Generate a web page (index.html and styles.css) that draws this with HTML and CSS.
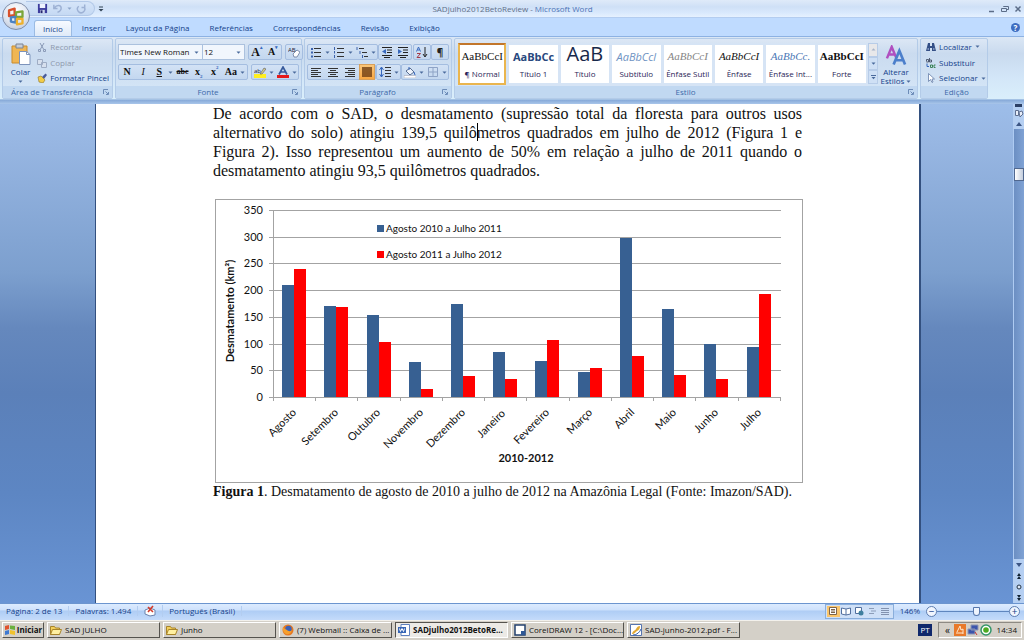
FILE: index.html
```html
<!DOCTYPE html>
<html lang="pt-BR">
<head>
<meta charset="utf-8">
<title>SADjulho2012BetoReview - Microsoft Word</title>
<link rel="stylesheet" href="styles.css">
</head>
<body>
<svg class="sprite" aria-hidden="true">
  <symbol id="down" viewBox="0 0 5 3"><path d="M0.5 0.5h4L2.500 2.800z" fill="#4a6a9c"/></symbol>
  <symbol id="launch" viewBox="0 0 6 6"><path d="M.5 5V.5H5M2.500 2.500L5 5M5.500 3v2.500H3" fill="none" stroke="#6d8cb8"/></symbol>
  <symbol id="folder" viewBox="0 0 12 12"><path d="M.5 2.500h4l1 1.500h4v6.500h-9z" fill="#f3cf5c" stroke="#a8842a"/><path d="M2.500 5.500h9l-2 5h-9z" fill="#fff0a0" stroke="#a8842a"/></symbol>
</svg>

<header class="top">
  <button class="office" aria-label="Botão Office">
    <svg viewBox="0 0 28 28"><g fill="none" stroke-width="2.500" stroke-linejoin="round"><path d="M6.500 8l6-2v7l-6 1z" stroke="#d8502a"/><path d="M14 10l7-1v6h-7z" stroke="#7ba63a"/><path d="M8.500 15.500l5-.5v6l-5-1z" stroke="#4b82c4"/><path d="M15 17h6v5l-6 1z" stroke="#eeb12e"/></g></svg>
  </button>
  <div class="titlebar">
    <div class="quick">
      <button aria-label="Salvar"><svg class="i11" viewBox="0 0 12 12"><path d="M1 1h10v10H1z" fill="#3d3d9e"/><path d="M3 1h6v4.500H3z" fill="#eef3ff"/><path d="M3.500 7.500h5V11h-5z" fill="#cdd6ee"/><path d="M4 8h2v3H4z" fill="#25256e"/></svg></button>
      <button aria-label="Desfazer"><svg class="i11" viewBox="0 0 12 12"><path d="M2 2v4h4M2.500 5.500C5 1.500 10 2 10 5.500c0 2.500-2 4-4 4.500" fill="none" stroke="#9db1d4" stroke-width="1.600"/></svg></button>
      <svg class="arr"><use href="#down"/></svg>
      <button aria-label="Refazer"><svg class="i11" viewBox="0 0 12 12"><path d="M9.500 1.500v3.500H6M9 4.500a4 4 0 1 1-6-1" fill="none" stroke="#9db1d4" stroke-width="1.600"/></svg></button>
    </div>
    <button class="more" aria-label="Personalizar"><svg viewBox="0 0 6 6"><path d="M1 1h4" stroke="#345"/><path d="M.5 3h5L3 5.500z" fill="#345"/></svg></button>
    <h1 class="title"><span>SADjulho2012BetoReview</span> - <b>Microsoft Word</b></h1>
    <div class="winbtns">
      <button aria-label="Minimizar"><svg viewBox="0 0 8 8"><path d="M1 6.500h5" stroke="#5c6d88" stroke-width="1.500"/></svg></button>
      <button aria-label="Restaurar"><svg viewBox="0 0 8 8"><path d="M2.500 2V1.500h5v3H6M.5 3.500h5v3h-5z" fill="none" stroke="#5c6d88"/></svg></button>
      <button aria-label="Fechar"><svg viewBox="0 0 8 8"><path d="M1.500 1.500l5 5M6.500 1.500l-5 5" stroke="#5c6d88" stroke-width="1.500"/></svg></button>
    </div>
  </div>
  <nav class="tabs">
    <button class="tab active">Início</button><button class="tab">Inserir</button><button class="tab">Layout da Página</button><button class="tab">Referências</button><button class="tab">Correspondências</button><button class="tab">Revisão</button><button class="tab">Exibição</button>
    <button class="help" aria-label="Ajuda">?</button>
  </nav>
</header>

<section class="ribbon">
  <div class="group clip">
    <div class="gbody">
      <button class="big"><svg class="paste" viewBox="0 0 20 22"><path d="M1 3h15v17H1z" fill="#f0b653" stroke="#c98b2d"/><path d="M5 1h7v4H5z" fill="#c7cdd8" stroke="#7b8494"/><path d="M8.500 8.500h7l3.500 3v10H8.500z" fill="#fff" stroke="#7d93bb"/><path d="M15.500 8.500v3H19" fill="none" stroke="#7d93bb"/></svg><span>Colar</span><svg class="arr"><use href="#down"/></svg></button>
      <div class="rows">
        <button class="row off"><svg class="i10" viewBox="0 0 10 10"><path d="M3 1l3.500 6M7 1L3.500 7" stroke="#8b9bb8"/><path d="M1.500 7.500h2v2h-2zM6.500 7.500h2v2h-2z" fill="none" stroke="#8b9bb8"/></svg>Recortar</button>
        <button class="row off"><svg class="i10" viewBox="0 0 10 10"><path d="M.5 1.500h5v5h-5zM4.500 4.500h5v5h-5z" fill="#d7e0ee" stroke="#9eacc4"/></svg>Copiar</button>
        <button class="row"><svg class="i10" viewBox="0 0 10 10"><path d="M5 4l3.500-3.500 1.500 1.500L7 6z" fill="#4a5c9c"/><path d="M1 4l3-1 4 4-2 3-4-1z" fill="#f2cc48" stroke="#8c7427" stroke-width=".6"/></svg>Formatar Pincel</button>
      </div>
    </div>
    <div class="glabel"><span>Área de Transferência</span><svg class="launch"><use href="#launch"/></svg></div>
  </div>

  <div class="group font">
    <div class="gbody stack">
      <div class="line">
        <div class="combo wide"><select aria-label="Fonte"><option>Times New Roman</option></select><svg class="arr"><use href="#down"/></svg></div>
        <div class="combo"><select aria-label="Tamanho"><option>12</option></select><svg class="arr"><use href="#down"/></svg></div>
        <div class="set gap"><button class="ser large">A<sup>▴</sup></button><button class="ser">A<sup>▾</sup></button></div>
        <div class="set gap"><button aria-label="Limpar formatação"><svg class="i12" viewBox="0 0 12 12"><text x="0" y="6" class="tiny">AB</text><path d="M5 8l4-4 3 2-3 5H6z" fill="#fff" stroke="#667799" stroke-width=".8"/></svg></button></div>
      </div>
      <div class="line">
        <div class="set fill"><button class="ser"><b>N</b></button><button class="ser"><i>I</i></button><button class="ser"><u>S</u></button><svg class="arr"><use href="#down"/></svg><button class="ser"><s>abc</s></button><button class="ser">x<sub>2</sub></button><button class="ser">x<sup>2</sup></button><button class="ser">Aa</button><svg class="arr"><use href="#down"/></svg></div>
        <div class="set gap hl"><button aria-label="Realce"><svg class="i12" viewBox="0 0 12 12"><path d="M0 8h12v4H0z" fill="#ffee20"/><text x="0" y="7" class="tiny">ab</text><path d="M6 8l4-6 2 1-4 5z" fill="#d6cd89" stroke="#556" stroke-width=".6"/></svg></button><svg class="arr"><use href="#down"/></svg><button aria-label="Cor da fonte"><svg class="i12" viewBox="0 0 12 12"><path d="M2 8.500L6 1l4 7.500M3.500 6h5" fill="none" stroke="#375a9c" stroke-width="1.700"/><path d="M0 9h12v3H0z" fill="#e61919"/></svg></button><svg class="arr"><use href="#down"/></svg></div>
      </div>
    </div>
    <div class="glabel"><span>Fonte</span><svg class="launch"><use href="#launch"/></svg></div>
  </div>

  <div class="group para">
    <div class="gbody stack">
      <div class="line between">
        <div class="set lists">
          <button aria-label="Marcadores"><svg class="i12" viewBox="0 0 12 12"><path d="M4 2.500h7M4 6.500h7M4 10.500h7" stroke="#333"/><path d="M1 2h2v2H1zM1 5.500h2v2H1zM1 9.500h2v2H1z" fill="#3c62ad"/></svg></button><svg class="arr"><use href="#down"/></svg>
          <button aria-label="Numeração"><svg class="i12" viewBox="0 0 12 12"><path d="M4 2.500h7M4 6.500h7M4 10.500h7" stroke="#333"/><path d="M1.500 1v3M1.500 5v2.500M1.500 9v3" stroke="#3c62ad"/></svg></button><svg class="arr"><use href="#down"/></svg>
          <button aria-label="Vários níveis"><svg class="i12" viewBox="0 0 12 12"><path d="M3 2.500h5M6 6.500h5M8 10.500h4" stroke="#333"/><path d="M1 1v3M4 5v3M6.500 9v3" stroke="#3c62ad"/></svg></button><svg class="arr"><use href="#down"/></svg>
        </div>
        <div class="set"><button aria-label="Diminuir recuo"><svg class="i12" viewBox="0 0 12 12"><path d="M1 1.500h10M6 4h5M6 6.500h5M1 9.500h10M3 11.500h6" stroke="#222"/><path d="M5 3v5L1 5.500z" fill="#3768bd"/></svg></button><button aria-label="Aumentar recuo"><svg class="i12" viewBox="0 0 12 12"><path d="M1 1.500h10M6 4h5M6 6.500h5M1 9.500h10M3 11.500h6" stroke="#222"/><path d="M1 3v5l4-2.500z" fill="#3768bd"/></svg></button></div>
        <div class="set"><button aria-label="Classificar"><svg class="i12" viewBox="0 0 12 12"><path d="M.5 5.500L2.500 1l2 4.500M1.500 4h2" fill="none" stroke="#3768bd"/><path d="M1 7.500h3.500L1 11.500h3.500" fill="none" stroke="#a33a4a"/><path d="M9 1v9M7 8l2 3 2-3" fill="none" stroke="#222"/></svg></button></div>
        <div class="set"><button class="pil">¶</button></div>
      </div>
      <div class="line between">
        <div class="set aligns">
          <button aria-label="Esquerda"><svg class="i12" viewBox="0 0 12 12"><path d="M1 2.500h10M1 4.500h7M1 6.500h10M1 8.500h7M1 10.500h10" stroke="#333"/></svg></button>
          <button aria-label="Centralizar"><svg class="i12" viewBox="0 0 12 12"><path d="M1 2.500h10M3 4.500h6M1 6.500h10M3 8.500h6M1 10.500h10" stroke="#333"/></svg></button>
          <button aria-label="Direita"><svg class="i12" viewBox="0 0 12 12"><path d="M1 2.500h10M4 4.500h7M1 6.500h10M4 8.500h7M1 10.500h10" stroke="#333"/></svg></button>
          <button class="on" aria-label="Justificar"><svg class="i12" viewBox="0 0 12 12"><path d="M1 2h10M1 4h10M1 6h10M1 8h10M1 10h10" stroke="#6b3a10" stroke-width="1.400"/></svg></button>
        </div>
        <div class="set"><button aria-label="Espaçamento"><svg class="i12" viewBox="0 0 12 12"><path d="M6 1.500h6M6 4.500h6M6 7.500h6M6 10.500h6" stroke="#333"/><path d="M2.500 1v10M.5 4l2-3 2 3M.5 8l2 3 2-3" fill="none" stroke="#3768bd"/></svg></button><svg class="arr"><use href="#down"/></svg></div>
        <div class="set"><button aria-label="Sombreamento"><svg class="i12" viewBox="0 0 12 12"><path d="M2 5l4-3 4 4-4 3z" fill="#eef3fb" stroke="#5a6d91"/><path d="M5 4V1M10 6l1 3" stroke="#3768bd" fill="none"/><path d="M0 9.500h12v2.500H0z" fill="#fff" stroke="#99a" stroke-width=".5"/></svg></button><svg class="arr"><use href="#down"/></svg><button aria-label="Bordas"><svg class="i12" viewBox="0 0 12 12"><path d="M1.500 1.500h9v9h-9zM6 1.500v9M1.500 6h9" fill="none" stroke="#8ea3c6"/></svg></button><svg class="arr"><use href="#down"/></svg></div>
      </div>
    </div>
    <div class="glabel"><span>Parágrafo</span><svg class="launch"><use href="#launch"/></svg></div>
  </div>

  <div class="group style">
    <div class="gbody">
      <div class="gallery">
        <button class="card sel"><span class="pv serif">AaBbCcI</span><span>¶ Normal</span></button>
        <button class="card"><span class="pv navy">AaBbCc</span><span>Título 1</span></button>
        <button class="card"><span class="pv huge">AaB</span><span>Título</span></button>
        <button class="card"><span class="pv sub">AaBbCcl</span><span>Subtítulo</span></button>
        <button class="card"><span class="pv serif em gray">AaBbCcI</span><span>Ênfase Sutil</span></button>
        <button class="card"><span class="pv serif em">AaBbCcI</span><span>Ênfase</span></button>
        <button class="card"><span class="pv serif em blue">AaBbCc.</span><span>Ênfase Int...</span></button>
        <button class="card"><span class="pv serif strong">AaBbCcI</span><span>Forte</span></button>
      </div>
      <div class="gscroll"><button class="dim" aria-label="Acima"><svg class="arr flip"><use href="#down"/></svg></button><button aria-label="Abaixo"><svg class="arr"><use href="#down"/></svg></button><button class="mo" aria-label="Mais"><svg class="arr"><use href="#down"/></svg></button></div>
      <button class="big alter"><svg class="aa" viewBox="0 0 22 22"><path d="M1.500 14L6.500 2l5 12M3.500 10h6" fill="none" stroke="#b04fc0" stroke-width="2.600"/><path d="M8.500 20.500L14.500 6l6 14.500M10.500 16h8" fill="none" stroke="#4c7fcb" stroke-width="2.800"/></svg><span>Alterar<br>Estilos <svg class="arr"><use href="#down"/></svg></span></button>
    </div>
    <div class="glabel"><span>Estilo</span><svg class="launch"><use href="#launch"/></svg></div>
  </div>

  <div class="group edit">
    <div class="gbody">
      <div class="rows">
        <button class="row"><svg class="i10" viewBox="0 0 10 10"><path d="M2 1h2v3h2V1h2l2 8H6V6H4v3H0z" fill="#344f86"/><path d="M1.500 7h1.500M7 7h1.500" stroke="#c5d6f0"/></svg>Localizar <svg class="arr"><use href="#down"/></svg></button>
        <button class="row"><svg class="i10" viewBox="0 0 10 10"><path d="M.5 3.500v-2h2v2.500h-2M3.500 0v4h2v-2h-2" fill="none" stroke="#333d55" stroke-width=".8"/><path d="M4.500 7v2.500h2V7h-2M9.500 7h-1.500v2.500h1.500" fill="none" stroke="#2f7a4a" stroke-width=".9"/><path d="M1 5.500v3h2" fill="none" stroke="#3768bd"/></svg>Substituir</button>
        <button class="row"><svg class="i10" viewBox="0 0 10 10"><path d="M2.500.5v8l2-2 1.500 3 1-.5-1-3h2.500z" fill="#fff" stroke="#667fa9" stroke-width=".8"/></svg>Selecionar <svg class="arr"><use href="#down"/></svg></button>
      </div>
    </div>
    <div class="glabel"><span>Edição</span></div>
  </div>
</section>

<main class="work">
  <article class="page">
    <p class="text">De acordo com o SAD, o desmatamento (supressão total da floresta para outros usos alternativo do solo) atingiu 139,5 quilô<span class="caret"></span>metros quadrados em julho de 2012 (Figura 1 e Figura 2). Isso representou um aumento de 50% em relação a julho de 2011 quando o desmatamento atingiu 93,5 quilômetros quadrados.</p>
    <figure class="fig">
      <svg class="chart" viewBox="0 0 586 282" role="img" aria-label="Desmatamento mensal">
        <path class="grid" d="M53 10.500h512M53 37.500h512M53 63.500h512M53 90.500h512M53 117.500h512M53 144.500h512M53 170.500h512M53 197.500h512M57.500 10v191M99.500 197v4M141.500 197v4M184.500 197v4M226.500 197v4M268.500 197v4M310.500 197v4M353.500 197v4M395.500 197v4M437.500 197v4M479.500 197v4M522.500 197v4M564.500 197v4"/>
        <g class="a"><path d="M66 197v-112h12v112zM108 197v-91h12v91zM151 197v-82h12v82zM193 197v-35h12v35zM235 197v-93h12v93zM277 197v-45h12v45zM319 197v-36h12v36zM362 197v-25h12v25zM404 197v-159h12v159zM446 197v-88h12v88zM488 197v-53h12v53zM531 197v-50h12v50z"/><path d="M161 25h7v7h-7z"/></g>
        <g class="b"><path d="M78 197v-128h12v128zM120 197v-90h12v90zM163 197v-55h12v55zM205 197v-8h12v8zM247 197v-21h12v21zM289 197v-18h12v18zM331 197v-57h12v57zM374 197v-29h12v29zM416 197v-41h12v41zM458 197v-22h12v22zM500 197v-18h12v18zM543 197v-103h12v103z"/><path d="M161 51h7v7h-7z"/></g>
        <g class="end"><text x="47" y="14">350</text><text x="47" y="41">300</text><text x="47" y="67">250</text><text x="47" y="94">200</text><text x="47" y="121">150</text><text x="47" y="148">100</text><text x="47" y="174">50</text><text x="47" y="201">0</text></g>
        <text class="leg" x="170" y="32">Agosto 2010 a Julho 2011</text>
        <text class="leg" x="170" y="58">Agosto 2011 a Julho 2012</text>
        <g class="end">
          <text transform="translate(81 213) rotate(-45)">Agosto</text><text transform="translate(123 213) rotate(-45)">Setembro</text><text transform="translate(165 213) rotate(-45)">Outubro</text><text transform="translate(208 213) rotate(-45)">Novembro</text><text transform="translate(250 213) rotate(-45)">Dezembro</text><text transform="translate(290 214) rotate(-45)">Janeiro</text><text transform="translate(334 213) rotate(-45)">Fevereiro</text><text transform="translate(377 213) rotate(-45)">Março</text><text transform="translate(419 213) rotate(-45)">Abril</text><text transform="translate(461 213) rotate(-45)">Maio</text><text transform="translate(503 213) rotate(-45)">Junho</text><text transform="translate(546 213) rotate(-45)">Julho</text>
        </g>
        <text class="axis" transform="translate(18 111) rotate(-90)">Desmatamento (km²)</text>
        <text class="axis" x="310" y="262">2010-2012</text>
      </svg>
      <figcaption><b>Figura 1</b>. Desmatamento de agosto de 2010 a julho de 2012 na Amazônia Legal (Fonte: Imazon/SAD).</figcaption>
    </figure>
  </article>
  <div class="scroll">
    <button class="split" aria-label="Dividir"></button>
    <button aria-label="Régua"><svg viewBox="0 0 10 10"><path d="M1.500 2.500h3v5h-3zM5 4l3-1 1 3-3 3z" fill="#e9effa" stroke="#5f6f90"/></svg></button>
    <button aria-label="Rolar para cima"><svg viewBox="0 0 10 10"><path d="M2 7l3-4 3 4z" fill="#3c5584"/></svg></button>
    <div class="track"><div class="thumb"></div></div>
    <button aria-label="Rolar para baixo"><svg viewBox="0 0 10 10"><path d="M2 3l3 4 3-4z" fill="#3c5584"/></svg></button>
    <button aria-label="Página anterior"><svg viewBox="0 0 10 10"><path d="M3 5l2-3 2 3zM3 8l2-3 2 3z" fill="#123"/></svg></button>
    <button aria-label="Procurar objeto"><svg viewBox="0 0 10 10"><circle cx="5" cy="5" r="2" fill="#dde8f8" stroke="#234"/></svg></button>
    <button aria-label="Próxima página"><svg viewBox="0 0 10 10"><path d="M3 2l2 3 2-3zM3 5l2 3 2-3z" fill="#123"/></svg></button>
  </div>
</main>

<footer class="status">
  <span class="cell">Página: 2 de 13</span><span class="cell">Palavras: 1.494</span>
  <span class="cell"><svg class="i12" viewBox="0 0 12 12"><path d="M1 5l5-2 5 2v5L6 11 1 9z" fill="#fff" stroke="#6d83ad"/><path d="M4 2l5 5M9 1L4 7" stroke="#d23b2b" stroke-width="1.600"/></svg></span>
  <span class="cell">Português (Brasil)</span>
  <div class="views">
    <button class="on" aria-label="Layout de impressão"><svg viewBox="0 0 10 10"><path d="M1.500 1.500h7v7h-7zM3 3.500h4M3 5h4M3 6.500h4" fill="#fff" stroke="#7d654b"/></svg></button>
    <button aria-label="Leitura"><svg viewBox="0 0 10 10"><path d="M.5 2l4.500 1 4.500-1v6L5 9 .5 8zM5 3v6" fill="#fff" stroke="#53709f"/></svg></button>
    <button aria-label="Layout da Web"><svg viewBox="0 0 10 10"><path d="M1.500 1.500h6v6h-6z" fill="#fff" stroke="#53709f"/><circle cx="7" cy="7" r="2.500" fill="#3f7f9f"/></svg></button>
    <button aria-label="Estrutura"><svg viewBox="0 0 10 10"><path d="M2 2.500h5M4 5h5M2 7.500h5" stroke="#8c9db9"/></svg></button>
    <button aria-label="Rascunho"><svg viewBox="0 0 10 10"><path d="M1 2.500h8M1 4.500h8M1 6.500h8M1 8.500h8" stroke="#8292af"/></svg></button>
  </div>
  <span class="pct">146%</span>
  <button class="round" aria-label="Menos zoom">−</button>
  <input class="zoom" type="range" min="0" max="100" value="55" aria-label="Zoom">
  <button class="round" aria-label="Mais zoom">+</button>
</footer>

<nav class="taskbar">
  <button class="start"><svg class="i12" viewBox="0 0 12 12"><path d="M1 2l4-1v4L1 6z" fill="#e0532f"/><path d="M6 1.500l5 .5v4l-5-1z" fill="#6ab03e"/><path d="M1 7l4-1v4l-4 1z" fill="#3d79d2"/><path d="M6 6l5 1v4l-5-1z" fill="#f0c22c"/></svg>Iniciar</button>
  <button class="task"><svg class="i12"><use href="#folder"/></svg><span>SAD JULHO</span></button>
  <button class="task"><svg class="i12"><use href="#folder"/></svg><span>Junho</span></button>
  <button class="task"><svg class="i12" viewBox="0 0 12 12"><circle cx="6" cy="6" r="5.500" fill="#e77820"/><circle cx="6.500" cy="5" r="3.200" fill="#3d62b5"/><path d="M1 3c1 2 3 2 4 3s3 2 5 0c-1 4-4 5-6 4S0 6 1 3z" fill="#f6a02c"/></svg><span>(7) Webmail :: Caixa de ...</span></button>
  <button class="task cur"><svg class="i12" viewBox="0 0 12 12"><path d="M3 .5h8.500v11H3z" fill="#fff" stroke="#5f80bd"/><path d="M0 3h8v6H0z" fill="#3866b5"/><path d="M1.500 4.500l1 3 1.500-3 1.500 3 1-3" fill="none" stroke="#fff"/></svg><span>SADjulho2012BetoRe...</span></button>
  <button class="task"><svg class="i12" viewBox="0 0 12 12"><path d="M1 1h10v10H1z" fill="#fff" stroke="#23406e" stroke-width="1.500"/><path d="M7 7h4v4H7z" fill="#2e5795"/></svg><span>CorelDRAW 12 - [C:\Doc...</span></button>
  <button class="task"><svg class="i12" viewBox="0 0 12 12"><path d="M.5.5h11v11H.5z" fill="#fff" stroke="#5674ae"/><path d="M2 10c1-4 3-3 4-5s2-3 4-3c0 3-1 4-3 5s-2 3-5 3z" fill="#e2a832"/><path d="M3 11c4 0 7-3 8-6" fill="none" stroke="#3c66ad"/></svg><span>SAD-junho-2012.pdf - F...</span></button>
  <span class="lang">PT</span>
  <div class="tray">
    <button aria-label="Ícones ocultos">«</button>
    <svg class="i12" viewBox="0 0 12 12"><path d="M0 0h12v12H0z" fill="#e8792a"/><path d="M3 8l3-6 1 4 2-1v5M2 9h7" fill="none" stroke="#ffe9d0"/></svg>
    <svg class="i12" viewBox="0 0 12 12"><path d="M4 1h7v5H4zM1 5h7v5H1z" fill="#3c55ab" stroke="#8d97b5"/><path d="M8 8l2 3" stroke="#c33"/></svg>
    <svg class="i12" viewBox="0 0 12 12"><circle cx="6" cy="6" r="5" fill="#fff" stroke="#34946a" stroke-width="1.500"/><circle cx="6" cy="6" r="2.800" fill="#4caa22"/></svg>
    <time>14:34</time>
  </div>
</nav>
</body>
</html>
```

FILE: styles.css
```css
* { box-sizing: border-box; }
html, body { height: 100%; }
body {
  margin: 0;
  display: flex;
  flex-direction: column;
  overflow: hidden;
  font: 8px/10px "Open Sans", "Noto Sans", sans-serif;
  color: #15428b;
  background: #bfdbff;
}
button, select, input { font: inherit; color: inherit; margin: 0; padding: 0; border: 0; background: none; }
button { display: inline-flex; align-items: center; justify-content: center; white-space: nowrap; }
svg { display: block; flex: none; }
.sprite { position: absolute; width: 0; height: 0; }
.arr { width: 5px; height: 3px; }
.i10 { width: 10px; height: 10px; }
.i11 { width: 11px; height: 11px; }
.i12 { width: 12px; height: 12px; }
.tiny { font: 6px "Open Sans", sans-serif; fill: #223; }

/* title bar and tabs */
.top { position: relative; flex: none; }
.office {
  position: absolute; left: 2px; top: 2px; z-index: 1;
  width: 28px; height: 28px; border-radius: 50%;
  border: 1px solid #7f8da8;
  background: radial-gradient(circle at 50% 30%, #fff, #dfe5f0 55%, #b3bfd3);
}
.office svg { width: 26px; height: 26px; }
.titlebar {
  display: flex; align-items: center; height: 18px;
  padding: 0 2px 0 26px;
  background: linear-gradient(#dfeaf9, #cfe0f6 40%, #d9e9fd 75%, #e6f1ff);
  border-bottom: 1px solid #b4cdf0;
}
.quick {
  display: flex; align-items: center; gap: 4px; height: 15px; padding: 0 7px 0 11px;
  border: 1px solid #b3c9e8; border-left: 0; border-radius: 0 8px 8px 0;
  background: linear-gradient(#d6e5f9, #c5d9f3);
}
.quick .arr { opacity: .5; }
.more { width: 12px; height: 12px; }
.more svg { width: 6px; height: 6px; }
.title { flex: 1; margin: 0; text-align: center; font-size: 8px; font-weight: 400; color: #5f6f88; padding-right: 70px; }
.title b { font-weight: 400; color: #4d73b6; }
.winbtns { display: flex; gap: 5px; }
.winbtns svg { width: 8px; height: 8px; }
.tabs { display: flex; align-items: flex-end; height: 18px; padding: 0 4px 0 34px; background: #bfdbff; }
.tab { height: 16px; padding: 0 10px; }
.tab.active {
  padding: 0 8px;
  border: 1px solid #9bbbe3; border-bottom: 0; border-radius: 3px 3px 0 0;
  background: linear-gradient(#f7faff, #dfeaf8);
}
.help { width: 9px; height: 9px; margin: 0 0 4px auto; border-radius: 50%; background: #3d6cc0; color: #fff; font-weight: 700; }

/* ribbon */
.ribbon {
  display: flex; flex: none; gap: 2px; height: 68px; padding: 1px 36px 5px 2px;
  border-top: 1px solid #8db2e3;
  background: linear-gradient(#dbe7f5, #c9daee 25%, #d3e6f8 60%, #d9eefb 90%, #d9eefb 92%, #86a9d8 94%, #a9c6ea);
}
.group {
  display: flex; flex-direction: column; min-width: 0;
  border: 1px solid #b3cbe8; border-radius: 2px;
  background: linear-gradient(#dce7f5, #cadbef 25%, #d6e7f8);
}
.clip { flex: 0 0 111px; }
.font { flex: 0 0 187px; }
.para { flex: 0 0 148px; }
.style { flex: 1; }
.edit { flex: 0 0 68px; }
.gbody { flex: 1; display: flex; padding: 0 3px; min-height: 0; }
.stack { flex-direction: column; padding: 5px 2px 2px; gap: 4px; }
.glabel {
  display: flex; align-items: center; height: 12px; padding: 0 3px 0 8px;
  background: #c1d8f1; color: #3e6aaa;
}
.glabel span { flex: 1; text-align: center; }
.clip .glabel span { text-align: left; }
.launch { width: 6px; height: 6px; }
.big { flex-direction: column; width: 30px; gap: 2px; }
.paste { width: 20px; height: 22px; }
.big .arr { margin-top: 1px; }
.rows { display: flex; flex-direction: column; padding-left: 2px; }
.row { flex: 1; justify-content: flex-start; gap: 3px; }
.off { color: #8d99ad; }
.line { display: flex; height: 16px; }
.between { justify-content: space-between; }
.combo { display: flex; align-items: center; flex: 0 0 43px; padding: 0 3px 0 0; border: 1px solid #abc1de; background: #f1f6fd; }
.combo.wide { flex: 0 0 84px; border-right: 0; }
.combo select { flex: 1; min-width: 0; padding-left: 1px; appearance: none; color: #111; }
.set {
  display: flex; align-items: center; gap: 2px; padding: 0 1px;
  border: 1px solid #a4bde0; border-radius: 2px;
  background: linear-gradient(#d3e2f5, #c3d7ef);
}
.set button { min-width: 14px; height: 14px; }
.gap { margin-left: 3px; }
.fill { flex: 1; justify-content: space-between; padding: 0 2px 0 1px; }
.lists, .aligns { gap: 3px; }
.lists { gap: 2px; }
.set .on { background: linear-gradient(#fbc678, #f9a743); outline: 1px solid #d8a05b; }
.ser { font: bold 10px/12px "Liberation Serif", serif; color: #111; }
.ser i { font-weight: 400; }
.ser.large { font-size: 12px; }
.ser s { font-size: 8px; }
.ser sup, .ser sub { font-size: 5px; line-height: 5px; color: #3768bd; }
.ser sup { align-self: flex-start; }
.ser sub { align-self: flex-end; }
.pil { color: #222; font-size: 10px; font-weight: 700; }

.style .gbody { padding: 4px 3px 0 3px; }
.gallery { flex: 1; display: grid; grid-template-columns: repeat(8, minmax(0, 1fr)); gap: 3px; padding: 0 2px 1px 0; background: #d6e4f5; }
.card { flex-direction: column; overflow: hidden; margin: 2px 0; background: #fff; color: #2a2557; justify-content: flex-end; gap: 2px; padding-bottom: 4px; }
.card.sel { margin: 0; border: 2px solid #eab54e; border-top-color: #c2762b; }
.pv { height: 21px; line-height: 21px; font-size: 11px; color: #111; }
.serif { font-family: "Liberation Serif", serif; }
.em { font-style: italic; }
.navy { color: #28487e; font-weight: 700; }
.pv.huge { font-size: 20px; line-height: 16px; color: #17294a; }
.sub { color: #6f93c3; font-style: italic; }
.gray { color: #858585; }
.blue { color: #4b77b5; }
.strong { font-weight: 700; }
.gscroll { display: flex; flex-direction: column; flex: 0 0 10px; margin-bottom: 2px; }
.gscroll button { flex: 1; border: 1px solid #b7cce8; background: #cfe0f5; }
.gscroll .dim { background: #e8e8ea; }
.gscroll .dim .arr { opacity: .4; }
.gscroll .mo .arr { border-top: 1px solid #4a6a9c; height: 5px; }
.flip { transform: rotate(180deg); }
.alter { width: 36px; gap: 1px; }
.alter .aa { width: 22px; height: 21px; }
.alter span { line-height: 9px; }
.alter .arr { display: inline-block; vertical-align: middle; margin: 0; }

/* document */
.work {
  flex: 1; display: flex; min-height: 0; padding-left: 95px;
  background: linear-gradient(#9dbde9, #97b6e2 8%, #7c9fce 34%, #6588bd 45%, #5b80b9 58%, #5d86c3 78%, #6994d4);
}
.page { flex: 1; min-width: 0; padding: 0 117px; background: #fff; border: solid #33507f; border-width: 0 2px 0 1px; overflow: hidden; }
.text { margin: 0; font: 16px/19px "Liberation Serif", serif; color: #111; text-align: justify; }
.caret { position: absolute; width: 1px; height: 18px; background: #000; }
.fig { margin: 19px 0 0; }
.chart {
  width: calc(100% - 1px); height: auto; margin-left: 2px;
  border: 1px solid #a3a3a3; font: 11px "Lato", sans-serif; fill: #111;
}
.grid { fill: none; stroke: #a3a3a3; }
.a { fill: #376092; }
.b { fill: #f00; }
.end { text-anchor: end; }
.leg { font-size: 10px; }
.axis { text-anchor: middle; font-weight: 700; }
figcaption { font: 14px/16px "Liberation Serif", serif; color: #111; white-space: nowrap; margin-top: 1px; }
.scroll { flex: 0 0 11px; margin-left: 92px; display: flex; flex-direction: column; background: #b5cff2; }
.scroll button { height: 11px; }
.scroll svg { width: 10px; height: 10px; }
.scroll .split { height: 3px; margin: 0 2px; background: #2c4066; }
.track { flex: 1; background: linear-gradient(90deg, #6c8fc3, #7fa2d4); border-left: 1px solid #aecbf2; padding-top: 39px; }
.thumb { height: 13px; border: 1px solid #51688f; background: linear-gradient(90deg, #fff, #c3cddd); }

/* status bar */
.status {
  display: flex; align-items: center; flex: none; height: 17px; padding: 0 4px 2px 0;
  border-top: 1px solid #6c95cf;
  background: linear-gradient(#dcebff, #cfe2fc 35%, #afcdf5 45%, #c4dbfa);
}
.cell { padding: 0 6px; border-right: 1px solid #b3cdf0; }
.views { display: flex; margin-left: auto; padding: 1px; border: 1px solid #8aaedb; background: #cfe0f7; }
.views button { width: 13px; height: 11px; }
.views svg { width: 10px; height: 10px; }
.views .on { background: #fbc66c; }
.pct { padding: 0 6px; }
.round { width: 11px; height: 11px; border: 1px solid #5d7db0; border-radius: 50%; background: #f1f6fe; font-size: 10px; line-height: 8px; }
.zoom { appearance: none; width: 72px; height: 11px; margin: 0; background: linear-gradient(#5f86be, #5f86be) center / 100% 1px no-repeat; }
.zoom::-webkit-slider-thumb { appearance: none; width: 7px; height: 9px; border: 1px solid #5677ad; border-radius: 1px 1px 4px 4px; background: #eef4fd; }

/* taskbar */
.taskbar {
  display: flex; align-items: center; flex: none; gap: 3px; height: 20px; padding: 0 2px 2px;
  background: #d4d0c8; border-top: 1px solid #f3f1ec; color: #111;
}
.start, .task {
  height: 16px; gap: 3px; padding: 0 2px; background: #d4d0c8;
  border: 1px solid; border-color: #fff #55534e #55534e #fff;
}
.start { flex: 0 0 42px; font-weight: 700; gap: 1px; padding: 0; }
.task { flex: 0 1 113px; min-width: 0; justify-content: flex-start; }
.task.cur { background: #eceae6; border-color: #55534e #fff #fff #55534e; font-weight: 700; }
.lang { margin-left: auto; padding: 1px 2px; background: #10286b; color: #fff; }
.tray { display: flex; align-items: center; gap: 1px; height: 16px; padding: 0 4px; border: 1px solid; border-color: #8d8a83 #fff #fff #8d8a83; margin-left: 3px; }
.tray button { width: 10px; font-size: 10px; }
.tray time { padding-left: 4px; }
```
